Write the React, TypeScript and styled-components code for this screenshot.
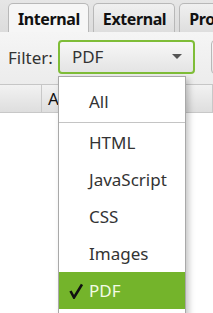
import styled, { createGlobalStyle } from 'styled-components';

const GlobalStyle = createGlobalStyle`
  html, body {
    margin: 0;
    padding: 0;
    background: #f4f4f4;
  }
  * {
    box-sizing: border-box;
  }
`;

const Page = styled.div`
  position: relative;
  width: 213px;
  height: 313px;
  overflow: hidden;
  font-family: 'Noto Sans', 'Open Sans', sans-serif;
  color: #333;
  background: #fff;
`;

const TabHeader = styled.div`
  display: flex;
  align-items: flex-end;
  gap: 4px;
  height: 32px;
  padding-left: 8px;
  background: linear-gradient(#e6e6e6, #dcdcdc);
  white-space: nowrap;
`;

const Tab = styled.div<{ $active?: boolean }>`
  flex-shrink: 0;
  display: flex;
  align-items: center;
  height: 29px;
  padding: 1px 8px 0 9px;
  border: 1px solid #b8b8b8;
  border-bottom: none;
  border-radius: 5px 5px 0 0;
  background: ${(p) => (p.$active ? '#f6f6f6' : 'linear-gradient(#f0f0f0, #dedede)')};
  font-size: 16px;
  letter-spacing: -0.4px;
  font-weight: 700;
  color: #111;
`;

const Toolbar = styled.div`
  display: flex;
  align-items: center;
  gap: 5px;
  height: 53px;
  padding: 0 8px;
  background: linear-gradient(#f5f5f5, #ececec);
  border-bottom: 1px solid #c6c6c6;
`;

const Label = styled.span`
  font-size: 17px;
  color: #333;
  margin-bottom: 2px;
`;

const Combo = styled.div`
  flex-shrink: 0;
  display: flex;
  align-items: center;
  justify-content: space-between;
  width: 137px;
  height: 34px;
  margin-bottom: 3px;
  padding: 0 11px 0 12px;
  border: 2px solid #7fbd38;
  border-radius: 4px;
  background: linear-gradient(#f7f7f7, #e4e4e4);
  font-size: 17px;
  color: #333;
`;

const Arrow = styled.span`
  width: 0;
  height: 0;
  border-left: 5px solid transparent;
  border-right: 5px solid transparent;
  border-top: 5px solid #555;
`;

const SideButton = styled.div`
  flex-shrink: 0;
  width: 30px;
  height: 34px;
  margin-left: 11px;
  margin-bottom: 3px;
  border: 1px solid #b8b8b8;
  border-radius: 4px;
  background: linear-gradient(#f7f7f7, #e4e4e4);
`;

const TableHeader = styled.div`
  display: flex;
  height: 28px;
  background: linear-gradient(#f2f2f2, #dedede);
  border-bottom: 1px solid #c8c8c8;
`;

const HeaderCell = styled.div<{ $width?: number }>`
  flex: ${(p) => (p.$width ? `0 0 ${p.$width}px` : '1')};
  display: flex;
  align-items: center;
  padding-left: 6px;
  border-right: 1px solid #c8c8c8;
  font-size: 17px;
  color: #111;
`;

const Popup = styled.div`
  position: absolute;
  left: 58px;
  top: 76px;
  width: 128px;
  bottom: -4px;
  padding-top: 6px;
  background: #fff;
  border: 1px solid #a9a9a9;
  box-shadow: 3px 3px 6px rgba(0, 0, 0, 0.22);
`;

const Item = styled.div<{ $selected?: boolean }>`
  position: relative;
  display: flex;
  align-items: center;
  height: 37px;
  padding-left: 30px;
  font-size: 17px;
  color: ${(p) => (p.$selected ? '#f2fbe6' : '#333')};
  background: ${(p) => (p.$selected ? '#74b42b' : 'transparent')};
`;

const Check = styled.span`
  position: absolute;
  left: 10px;
  top: 50%;
  transform: translateY(-50%);
  display: flex;
`;

const Separator = styled.div`
  height: 4px;
  display: flex;
  align-items: center;
  &::after {
    content: '';
    flex: 1;
    height: 1px;
    background: #c4c4c4;
  }
`;

const items = ['HTML', 'JavaScript', 'CSS', 'Images', 'PDF'];

export default function App() {
  const selected = 'PDF';
  return (
    <Page>
      <GlobalStyle />
      <TabHeader>
        <Tab $active>Internal</Tab>
        <Tab>External</Tab>
        <Tab>Protocol</Tab>
      </TabHeader>
      <Toolbar>
        <Label>Filter:</Label>
        <Combo>
          <span>{selected}</span>
          <Arrow />
        </Combo>
        <SideButton />
      </Toolbar>
      <TableHeader>
        <HeaderCell $width={42} />
        <HeaderCell>Address</HeaderCell>
      </TableHeader>
      <Popup>
        <Item>All</Item>
        <Separator />
        {items.map((name) => (
          <Item key={name} $selected={name === selected}>
            {name === selected && (
              <Check>
                <svg width="14" height="16" viewBox="0 0 14 16">
                  <path d="M1.5 8 L5 14.5 L13 1.5" fill="none" stroke="#111" strokeWidth="2.6" strokeLinejoin="miter" />
                </svg>
              </Check>
            )}
            {name}
          </Item>
        ))}
      </Popup>
    </Page>
  );
}
